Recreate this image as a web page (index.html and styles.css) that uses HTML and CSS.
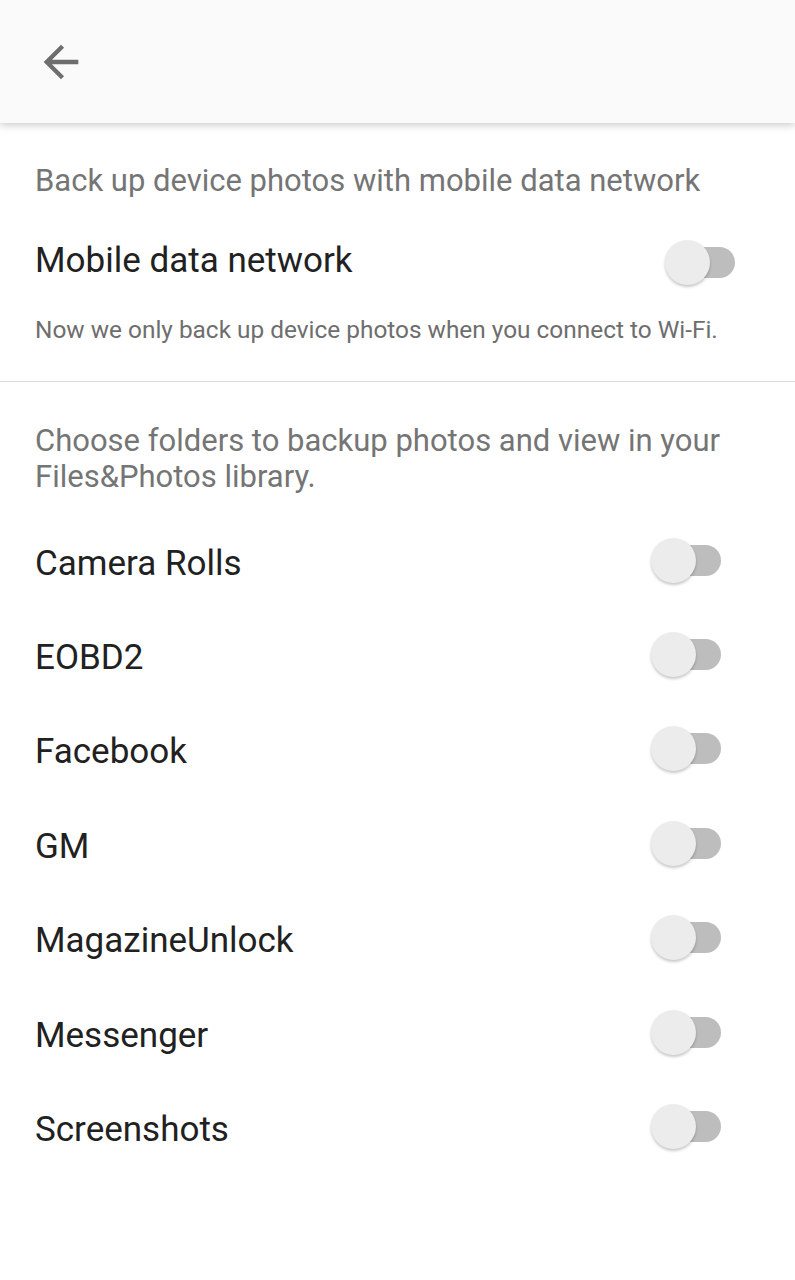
FILE: index.html
```html
<!DOCTYPE html>
<html lang="en">
<head>
  <meta charset="UTF-8">
  <meta name="viewport" content="width=device-width, initial-scale=1.0">
  <title>Backup settings</title>
  <link rel="stylesheet" href="styles.css">
</head>
<body>
  <header class="topbar">
    <button class="back" title="Back">
      <svg viewBox="0 0 24 24" width="52" height="52"><path d="M20 11H7.83l5.59-5.59L12 4l-8 8 8 8 1.41-1.41L7.83 13H20v-2z"/></svg>
    </button>
  </header>

  <section class="block block-mobile">
    <p class="caption">Back up device photos with mobile data network</p>
    <div class="row row-mobile">
      <span class="label">Mobile data network</span>
      <span class="switch"><span class="knob"></span></span>
    </div>
    <p class="note">Now we only back up device photos when you connect to Wi-Fi.</p>
  </section>

  <section class="block block-folders">
    <p class="caption">Choose folders to backup photos and view in your Files&amp;Photos library.</p>
    <ul class="folders">
      <li class="row"><span class="label">Camera Rolls</span><span class="switch"><span class="knob"></span></span></li>
      <li class="row"><span class="label">EOBD2</span><span class="switch"><span class="knob"></span></span></li>
      <li class="row"><span class="label">Facebook</span><span class="switch"><span class="knob"></span></span></li>
      <li class="row"><span class="label">GM</span><span class="switch"><span class="knob"></span></span></li>
      <li class="row"><span class="label">MagazineUnlock</span><span class="switch"><span class="knob"></span></span></li>
      <li class="row"><span class="label">Messenger</span><span class="switch"><span class="knob"></span></span></li>
      <li class="row"><span class="label">Screenshots</span><span class="switch"><span class="knob"></span></span></li>
    </ul>
  </section>
</body>
</html>
```

FILE: styles.css
```css
* {
  box-sizing: border-box;
}

body {
  margin: 0;
  background: #fff;
  font-family: Roboto, "Noto Sans", sans-serif;
  color: #212121;
}

p {
  margin: 0;
}

.topbar {
  height: 123px;
  background: #fafafa;
  box-shadow: 0 2px 8px rgba(0, 0, 0, .22);
  display: flex;
  align-items: center;
  padding-left: 35px;
  position: relative;
}

.back {
  border: 0;
  padding: 0;
  background: none;
  display: flex;
}

.back svg {
  fill: #6e6e6e;
}

.block {
  padding: 0 35px;
}

.block-mobile {
  padding-top: 40px;
  padding-bottom: 35px;
  border-bottom: 1px solid #dcdcdc;
}

.block-folders {
  padding-top: 41px;
}

.caption {
  font-size: 31px;
  line-height: 36px;
  color: #757575;
}

.note {
  font-size: 24.4px;
  line-height: 32px;
  color: #6e6e6e;
  margin-top: 24px;
}

.row {
  display: flex;
  align-items: center;
  justify-content: space-between;
}

.row-mobile {
  height: 56px;
  margin-top: 35px;
  padding-right: 25px;
}

.label {
  font-size: 35px;
  margin-top: -3px;
}

.folders {
  list-style: none;
  margin: 18px 0 0;
  padding: 0;
}

.folders .row {
  height: 94.4px;
  padding-right: 39px;
}

.folders .label {
  margin-top: 6px;
}

.switch {
  position: relative;
  width: 64px;
  height: 31px;
  border-radius: 16px;
  background: #bdbdbd;
}

.knob {
  position: absolute;
  left: -6px;
  top: -7px;
  width: 45px;
  height: 45px;
  border-radius: 50%;
  background: #ececec;
  box-shadow: 0 2px 3px rgba(0, 0, 0, .22);
}
```
